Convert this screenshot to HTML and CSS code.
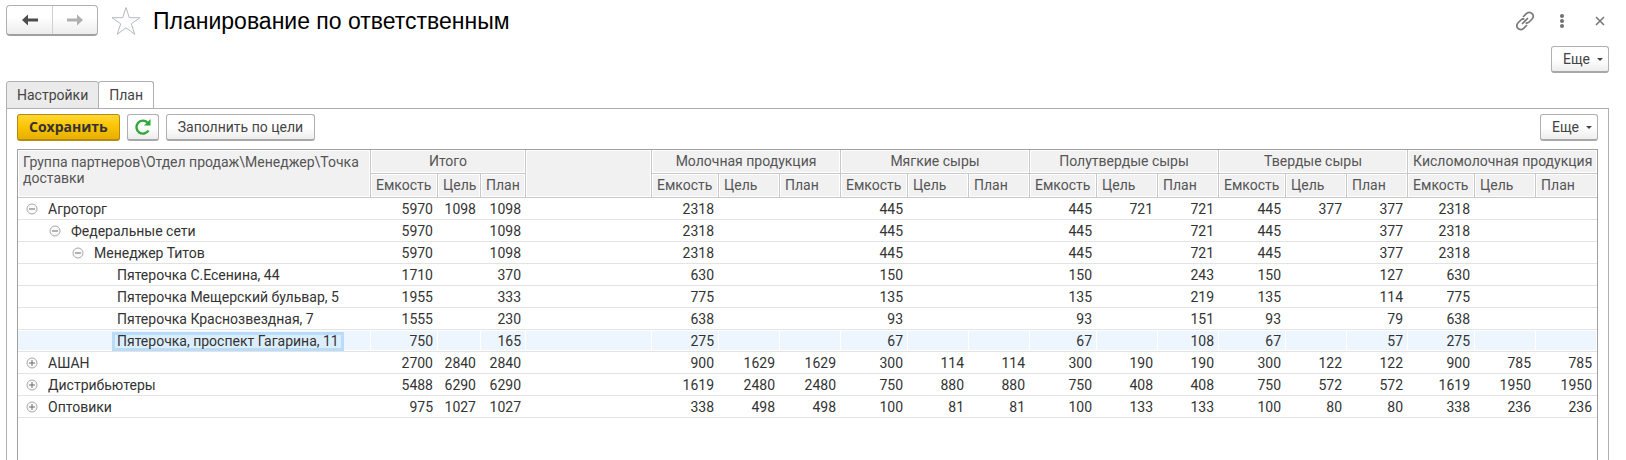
FILE: index.html
```html
<!DOCTYPE html>
<html lang="ru">
<head>
<meta charset="utf-8">
<meta name="viewport" content="width=device-width, initial-scale=1">
<title>Планирование по ответственным</title>
<link rel="stylesheet" href="styles.css">
</head>
<body>
<svg class="sprite" aria-hidden="true">
  <symbol id="minus" viewBox="0 0 12 12"><circle cx="6" cy="6" r="5" fill="#fafafa" stroke="#a8a8a8"/><path d="M3 6h6" stroke="#6a6a6a" fill="none"/></symbol>
  <symbol id="plus" viewBox="0 0 12 12"><circle cx="6" cy="6" r="5" fill="#fafafa" stroke="#a8a8a8"/><path d="M3 6h6M6 3v6" stroke="#6a6a6a" fill="none"/></symbol>
</svg>
<header class="titlebar">
  <div class="history">
    <button type="button" class="history-btn" aria-label="Назад"><svg width="18" height="14" viewBox="0 0 18 14"><path d="M1 7l6-5.500v4h10v3H7v4z" fill="#4d4d4d"/></svg></button>
    <button type="button" class="history-btn" aria-label="Вперед"><svg width="18" height="14" viewBox="0 0 18 14"><path d="M17 7l-6-5.500v4H1v3h10v4z" fill="#b0b0b0"/></svg></button>
  </div>
  <button type="button" class="icon-btn star" aria-label="В избранное"><svg width="30" height="30" viewBox="0 0 30 30"><path d="M15 1.500l3.300 10.200H29l-8.700 6.100 3.500 10.500-8.800-6.500-8.800 6.500 3.500-10.500L1 11.700h10.700z" fill="#fff" stroke="#b4bac2"/></svg></button>
  <h1 class="title">Планирование по ответственным</h1>
  <div class="window-tools">
    <button type="button" class="icon-btn" aria-label="Ссылка"><svg width="20" height="20" viewBox="0 0 20 20" fill="none" stroke="#777" stroke-width="1.700" stroke-linecap="round"><path d="M8.500 5.500l2.800-2.800a3.700 3.700 0 0 1 5.800 0 3.700 3.700 0 0 1 0 5.300l-3 3a3.700 3.700 0 0 1-3 1M11.500 14.500l-2.800 2.800a3.700 3.700 0 0 1-5.800 0 3.700 3.700 0 0 1 0-5.300l3-3a3.700 3.700 0 0 1 3-1M7.500 12.500l5-5"/></svg></button>
    <button type="button" class="icon-btn" aria-label="Меню"><svg width="6" height="16" viewBox="0 0 6 16" fill="#707070"><circle cx="3" cy="3" r="2"/><circle cx="3" cy="8" r="2"/><circle cx="3" cy="13" r="2"/></svg></button>
    <button type="button" class="icon-btn" aria-label="Закрыть"><svg width="10" height="10" viewBox="0 0 10 10"><path d="M1 1l8 8M9 1L1 9" stroke="#777" stroke-width="1.600"/></svg></button>
  </div>
</header>
<div class="form-commands">
  <button type="button" class="btn more">Еще <span class="caret"></span></button>
</div>
<nav class="tabs" role="tablist">
  <button type="button" class="tab" role="tab" aria-selected="false">Настройки</button>
  <button type="button" class="tab active" role="tab" aria-selected="true">План</button>
</nav>
<main class="panel">
  <div class="toolbar">
    <button type="button" class="btn primary">Сохранить</button>
    <button type="button" class="btn refresh" aria-label="Обновить"><svg width="18" height="18" viewBox="0 0 18 18"><path d="M14.500 12.500A6.500 6.500 0 1 1 13.500 4.500" fill="none" stroke="#2ea836" stroke-width="2.400"/><path d="M16.500 1v6.500H10z" fill="#2ea836"/></svg></button>
    <button type="button" class="btn">Заполнить по цели</button>
    <button type="button" class="btn more last">Еще <span class="caret"></span></button>
  </div>
  <div class="grid">
    <table>
      <colgroup>
        <col class="c-name"><col class="c-cap"><col class="c-goal"><col class="c-plan"><col class="c-gap">
        <col class="c-cap"><col class="c-val"><col class="c-val">
        <col class="c-cap"><col class="c-val"><col class="c-val">
        <col class="c-cap"><col class="c-val"><col class="c-val">
        <col class="c-cap"><col class="c-val"><col class="c-val">
        <col class="c-cap"><col class="c-val"><col class="c-val">
      </colgroup>
      <thead>
        <tr><th rowspan="2" class="name-head">Группа партнеров\Отдел продаж\Менеджер\Точка доставки</th><th colspan="3" class="group">Итого</th><th rowspan="2"></th><th colspan="3" class="group">Молочная продукция</th><th colspan="3" class="group">Мягкие сыры</th><th colspan="3" class="group">Полутвердые сыры</th><th colspan="3" class="group">Твердые сыры</th><th colspan="3" class="group">Кисломолочная продукция</th></tr>
        <tr><th>Емкость</th><th>Цель</th><th>План</th><th>Емкость</th><th>Цель</th><th>План</th><th>Емкость</th><th>Цель</th><th>План</th><th>Емкость</th><th>Цель</th><th>План</th><th>Емкость</th><th>Цель</th><th>План</th><th>Емкость</th><th>Цель</th><th>План</th></tr>
      </thead>
      <tbody>
        <tr><td><div class="node"><button type="button" class="toggle" aria-label="Свернуть"><svg><use href="#minus"/></svg></button>Агроторг</div></td><td>5970</td><td>1098</td><td>1098</td><td></td><td>2318</td><td></td><td></td><td>445</td><td></td><td></td><td>445</td><td>721</td><td>721</td><td>445</td><td>377</td><td>377</td><td>2318</td><td></td><td></td></tr>
        <tr><td><div class="node level-2"><button type="button" class="toggle" aria-label="Свернуть"><svg><use href="#minus"/></svg></button>Федеральные сети</div></td><td>5970</td><td></td><td>1098</td><td></td><td>2318</td><td></td><td></td><td>445</td><td></td><td></td><td>445</td><td></td><td>721</td><td>445</td><td></td><td>377</td><td>2318</td><td></td><td></td></tr>
        <tr><td><div class="node level-3"><button type="button" class="toggle" aria-label="Свернуть"><svg><use href="#minus"/></svg></button>Менеджер Титов</div></td><td>5970</td><td></td><td>1098</td><td></td><td>2318</td><td></td><td></td><td>445</td><td></td><td></td><td>445</td><td></td><td>721</td><td>445</td><td></td><td>377</td><td>2318</td><td></td><td></td></tr>
        <tr><td><div class="node leaf"><span class="label">Пятерочка С.Есенина, 44</span></div></td><td>1710</td><td></td><td>370</td><td></td><td>630</td><td></td><td></td><td>150</td><td></td><td></td><td>150</td><td></td><td>243</td><td>150</td><td></td><td>127</td><td>630</td><td></td><td></td></tr>
        <tr><td><div class="node leaf"><span class="label">Пятерочка Мещерский бульвар, 5</span></div></td><td>1955</td><td></td><td>333</td><td></td><td>775</td><td></td><td></td><td>135</td><td></td><td></td><td>135</td><td></td><td>219</td><td>135</td><td></td><td>114</td><td>775</td><td></td><td></td></tr>
        <tr><td><div class="node leaf"><span class="label">Пятерочка Краснозвездная, 7</span></div></td><td>1555</td><td></td><td>230</td><td></td><td>638</td><td></td><td></td><td>93</td><td></td><td></td><td>93</td><td></td><td>151</td><td>93</td><td></td><td>79</td><td>638</td><td></td><td></td></tr>
        <tr class="selected"><td><div class="node leaf"><span class="label">Пятерочка, проспект Гагарина, 11</span></div></td><td>750</td><td></td><td>165</td><td></td><td>275</td><td></td><td></td><td>67</td><td></td><td></td><td>67</td><td></td><td>108</td><td>67</td><td></td><td>57</td><td>275</td><td></td><td></td></tr>
        <tr><td><div class="node"><button type="button" class="toggle" aria-label="Развернуть"><svg><use href="#plus"/></svg></button>АШАН</div></td><td>2700</td><td>2840</td><td>2840</td><td></td><td>900</td><td>1629</td><td>1629</td><td>300</td><td>114</td><td>114</td><td>300</td><td>190</td><td>190</td><td>300</td><td>122</td><td>122</td><td>900</td><td>785</td><td>785</td></tr>
        <tr><td><div class="node"><button type="button" class="toggle" aria-label="Развернуть"><svg><use href="#plus"/></svg></button>Дистрибьютеры</div></td><td>5488</td><td>6290</td><td>6290</td><td></td><td>1619</td><td>2480</td><td>2480</td><td>750</td><td>880</td><td>880</td><td>750</td><td>408</td><td>408</td><td>750</td><td>572</td><td>572</td><td>1619</td><td>1950</td><td>1950</td></tr>
        <tr><td><div class="node"><button type="button" class="toggle" aria-label="Развернуть"><svg><use href="#plus"/></svg></button>Оптовики</div></td><td>975</td><td>1027</td><td>1027</td><td></td><td>338</td><td>498</td><td>498</td><td>100</td><td>81</td><td>81</td><td>100</td><td>133</td><td>133</td><td>100</td><td>80</td><td>80</td><td>338</td><td>236</td><td>236</td></tr>
      </tbody>
    </table>
  </div>
</main>
</body>
</html>
```
FILE: styles.css
```css
* { box-sizing: border-box; }

body {
  margin: 0;
  padding: 5px 17px 0 6px;
  min-height: 100vh;
  display: flex;
  flex-direction: column;
  background: #fff;
  color: #333;
  font: 14px/16px Roboto, "Liberation Sans", sans-serif;
}

button { font: inherit; color: inherit; margin: 0; padding: 0; cursor: pointer; }
svg { display: block; }
.sprite { width: 0; height: 0; position: absolute; }

/* Title bar */
.titlebar { display: flex; align-items: center; height: 31px; }
.history {
  display: flex;
  height: 31px;
  border: 1px solid #b0b0b0;
  border-bottom: 2px solid #a0a0a0;
  border-radius: 4px;
  background: linear-gradient(#fff 40%, #ececec);
}
.history-btn {
  width: 45px;
  display: flex;
  align-items: center;
  justify-content: center;
  border: 0;
  background: none;
}
.history-btn + .history-btn { border-left: 1px solid #d0d0d0; }
.icon-btn { border: 0; background: none; }
.star { margin-left: 13px; }
.title {
  margin: 0 0 0 12px;
  font: 23px/26px "Liberation Sans", Arial, sans-serif;
  color: #000;
}
.window-tools { display: flex; align-items: center; gap: 24px; margin-left: auto; padding-right: 4px; }
.window-tools .icon-btn:last-child { margin-left: 6px; }

/* Buttons */
.btn {
  height: 27px;
  padding: 0 11px;
  border: 1px solid #b0b0b0;
  border-bottom: 2px solid #a8a8a8;
  border-radius: 3px;
  background: linear-gradient(#fff 50%, #ededed);
  color: #444;
}
.primary {
  border-color: #b58a14;
  background: linear-gradient(#ffd633, #fac303 50%, #e8b000);
  color: #333;
  font-family: "Open Sans", sans-serif;
  font-weight: 700;
}
.refresh { width: 32px; padding: 0; display: flex; align-items: center; justify-content: center; }
.more { display: flex; align-items: center; gap: 7px; padding: 0 5px 0 11px; }
.caret { border: 3px solid transparent; border-top-color: #444; border-bottom: 0; }
.form-commands { display: flex; justify-content: flex-end; margin-top: 10px; }

/* Tabs and panel */
.tabs { display: flex; margin: 8px 0 -1px; }
.tab {
  height: 28px;
  padding: 0 10px;
  border: 1px solid #b0b0b0;
  border-radius: 3px 3px 0 0;
  background: #ebebeb;
  color: #444;
}
.tab.active { margin-left: -1px; border-bottom-color: #fff; background: #fff; }
.panel {
  flex: 1;
  display: flex;
  flex-direction: column;
  padding: 5px 10px 0;
  border: 1px solid #b0b0b0;
  border-bottom: 0;
}
.toolbar { display: flex; gap: 7px; margin-bottom: 8px; }
.last { margin-left: auto; }

/* Plan table */
.grid { flex: 1; border: 1px solid #a0a0a0; border-bottom: 0; }
table { width: 100%; table-layout: fixed; border-collapse: separate; border-spacing: 0; }
.c-name { width: 353px; }
.c-cap { width: 67px; }
.c-goal { width: 43px; }
.c-plan { width: 45px; }
.c-gap { width: 126px; }
.c-val { width: 61px; }
th {
  height: 24px;
  padding: 0 5px 1px;
  border-right: 1px solid #c8c8c8;
  border-bottom: 1px solid #c8c8c8;
  background: #f1f1f1;
  box-shadow: inset 0 0 0 1px #fff;
  color: #555;
  font-weight: 400;
  text-align: left;
  white-space: nowrap;
}
.group { text-align: center; }
.name-head { padding-top: 4px; vertical-align: top; white-space: normal; }
thead tr:first-child th:last-child, thead tr:last-child th:last-child { border-right: 0; }
td {
  height: 22px;
  padding: 1px 5px 0 0;
  border-bottom: 1px solid #e3e3e3;
  text-align: right;
  white-space: nowrap;
}
td:first-child { text-align: left; }
.node { display: flex; align-items: center; padding-left: 8px; }
.level-2 { padding-left: 31px; }
.level-3 { padding-left: 54px; }
.leaf { padding-left: 94px; }
.toggle { margin-right: 10px; border: 0; background: none; }
.toggle svg { width: 12px; height: 12px; }
.label { padding: 0 5px; line-height: 19px; }
.selected td { background: #edf6fe; box-shadow: inset -1px 0 #fff, inset 0 1px #fff, inset 0 -1px #fff; }
.selected .label { padding: 0 2px; border: 3px solid #b8dcfa; background: #dceefc; line-height: 13px; }
```
